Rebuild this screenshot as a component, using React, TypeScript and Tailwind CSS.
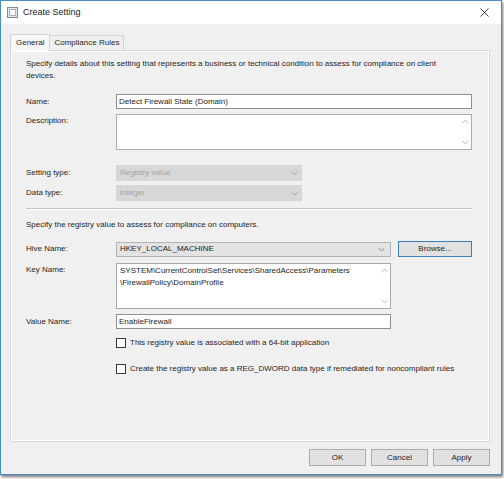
import React from 'react';

const Chevron: React.FC<{ up?: boolean; color?: string }> = ({ up, color = '#8a8a8a' }) => (
  <svg width="7" height="5" viewBox="0 0 7 5" fill="none">
    <path d={up ? 'M0.5 4.2 L3.5 1 L6.5 4.2' : 'M0.5 0.8 L3.5 4 L6.5 0.8'} stroke={color} strokeWidth="0.9" />
  </svg>
);

const Label: React.FC<{ children: React.ReactNode }> = ({ children }) => (
  <div className="w-[90px] shrink-0 text-[8px] text-[#1e1e1e]">{children}</div>
);

const Check: React.FC<{ text: string }> = ({ text }) => (
  <div className="flex items-center h-[10px] pl-[90px]">
    <div className="w-[10px] h-[10px] border border-[#3a3a3a] bg-white shrink-0" />
    <span className="ml-[4px] text-[8px] text-[#1e1e1e] whitespace-nowrap">{text}</span>
  </div>
);

export default function App() {
  return (
    <div className="w-[504px] h-[479px] bg-white font-['Liberation_Sans',Arial,sans-serif]">
      <div className="w-[502px] h-[475px] border border-[#4d8bc6] bg-[#f0f0f0] shadow-[1px_2px_3px_rgba(0,0,0,0.55)] flex flex-col">
        {/* title bar */}
        <div className="h-[23px] bg-white flex items-center shrink-0">
          <svg className="ml-[6px]" width="11" height="11" viewBox="0 0 11 11">
            <rect x="0.5" y="0.5" width="10" height="10" fill="#dfe6ee" stroke="#7f8c99" />
            <rect x="2.5" y="2.5" width="6" height="6" fill="#f7f9fb" stroke="#a9b4bf" />
          </svg>
          <span className="ml-[5px] text-[9px] text-[#1a1a1a]">Create Setting</span>
          <svg className="ml-auto mr-[12px]" width="9" height="9" viewBox="0 0 9 9">
            <path d="M0.5 0.5 L8.5 8.5 M8.5 0.5 L0.5 8.5" stroke="#333" strokeWidth="0.9" />
          </svg>
        </div>

        <div className="flex-1 flex flex-col pl-[9px] pr-[11px]">
          {/* tabs */}
          <div className="flex items-end h-[26px] pt-[9px]">
            <div className="h-[17px] px-[5px] flex items-center bg-[#f7f7f7] border border-b-0 border-[#d4d4d4] text-[8px] text-[#1e1e1e] relative top-[1px]">
              General
            </div>
            <div className="h-[15px] px-[4px] flex items-center border border-b-0 border-l-0 border-[#d4d4d4] text-[8px] text-[#1e1e1e]">
              Compliance Rules
            </div>
          </div>

          {/* panel */}
          <div className="h-[392px] border border-[#d9d9d9] bg-[#f0f0f0] shadow-[inset_1px_1px_0_#ffffff,inset_-1px_-1px_0_#ffffff] pl-[15px] pr-[17px] pt-[7px] flex flex-col">
            <p className="text-[8px] leading-[12px] text-[#1e1e1e] whitespace-nowrap">
              Specify details about this setting that represents a business or technical condition to assess for compliance on client
              <br />
              devices.
            </p>

            <div className="flex items-center mt-[12px]">
              <Label>Name:</Label>
              <div className="flex-1 h-[15px] border border-[#8f8f8f] bg-white flex items-center px-[2px] text-[8px] text-[#1e1e1e]">
                Detect Firewall State (Domain)
              </div>
            </div>

            <div className="flex items-start mt-[5px]">
              <div className="pt-[1px]"><Label>Description:</Label></div>
              <div className="flex-1 h-[36px] border border-[#a9a9a9] bg-white flex justify-end">
                <div className="w-[12px] flex flex-col items-center justify-between py-[4px]">
                  <Chevron up color="#b0b0b0" />
                  <Chevron color="#b0b0b0" />
                </div>
              </div>
            </div>

            <div className="flex items-center mt-[15px]">
              <Label>Setting type:</Label>
              <div className="w-[186px] h-[16px] bg-[#d7d7d7] flex items-center justify-between px-[4px] text-[8px] text-[#a3a3a3]">
                Registry value
                <Chevron color="#a8a8a8" />
              </div>
            </div>

            <div className="flex items-center mt-[4px]">
              <Label>Data type:</Label>
              <div className="w-[186px] h-[16px] bg-[#d7d7d7] flex items-center justify-between px-[4px] text-[8px] text-[#a3a3a3]">
                Integer
                <Chevron color="#a8a8a8" />
              </div>
            </div>

            <div className="mt-[7px] h-[2px] border-t border-[#c4c4c4] border-b border-b-white" />

            <p className="mt-[9px] text-[8px] leading-[12px] text-[#1e1e1e]">
              Specify the registry value to assess for compliance on computers.
            </p>

            <div className="flex items-center mt-[10px]">
              <Label>Hive Name:</Label>
              <div className="w-[275px] h-[15px] border border-[#b4b4b4] bg-[#e3e3e3] flex items-center justify-between pl-[3px] pr-[5px] text-[8px] text-[#1e1e1e]">
                HKEY_LOCAL_MACHINE
                <Chevron />
              </div>
              <div className="ml-auto w-[74px] h-[16px] border border-[#3c7fbf] bg-[#e1e1e1] flex items-center justify-center text-[8px] text-[#1e1e1e]">
                Browse...
              </div>
            </div>

            <div className="flex items-start mt-[6px]">
              <div className="pt-[1px]"><Label>Key Name:</Label></div>
              <div className="w-[275px] h-[46px] border border-[#a9a9a9] bg-white flex">
                <div className="flex-1 px-[3px] pt-[1px] text-[8px] leading-[12px] text-[#1e1e1e] whitespace-nowrap">
                  SYSTEM\CurrentControlSet\Services\SharedAccess\Parameters
                  <br />
                  \FirewallPolicy\DomainProfile
                </div>
                <div className="w-[12px] flex flex-col items-center justify-between py-[4px]">
                  <Chevron up color="#b0b0b0" />
                  <Chevron color="#b0b0b0" />
                </div>
              </div>
            </div>

            <div className="flex items-center mt-[5px]">
              <Label>Value Name:</Label>
              <div className="w-[275px] h-[15px] border border-[#8f8f8f] bg-white flex items-center px-[2px] text-[8px] text-[#1e1e1e]">
                EnableFirewall
              </div>
            </div>

            <div className="mt-[9px]">
              <Check text="This registry value is associated with a 64-bit application" />
            </div>
            <div className="mt-[16px]">
              <Check text="Create the registry value as a REG_DWORD data type if remediated for noncompliant rules" />
            </div>
          </div>

          {/* buttons */}
          <div className="flex justify-end gap-[5px] mt-[7px]">
            {['OK', 'Cancel', 'Apply'].map(b => (
              <div key={b} className="w-[57px] h-[17px] border border-[#adadad] bg-[#e1e1e1] flex items-center justify-center text-[8px] text-[#1e1e1e]">
                {b}
              </div>
            ))}
          </div>
        </div>
      </div>
    </div>
  );
}
